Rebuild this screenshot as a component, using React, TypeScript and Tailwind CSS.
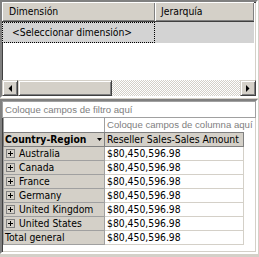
const rows = ['Australia', 'Canada', 'France', 'Germany', 'United Kingdom', 'United States']
const amount = '$80,450,596.98'

const raised =
  'bg-[#d4d0c8] border border-t-[#d4d0c8] border-l-[#d4d0c8] border-r-[#404040] border-b-[#404040] shadow-[inset_1px_1px_0_#fff,inset_-1px_-1px_0_#808080]'

const sunken =
  'border-2 border-t-[#808080] border-l-[#808080] border-r-[#fff] border-b-[#fff] shadow-[inset_1px_1px_0_#404040,inset_-1px_-1px_0_#d4d0c8]'

function Arrow({ dir }: { dir: 'left' | 'right' }) {
  return (
    <svg width="4" height="7" viewBox="0 0 4 7">
      {dir === 'left' ? <path d="M4 0V7L0.5 3.5Z" fill="#000" /> : <path d="M0 0V7L3.5 3.5Z" fill="#000" />}
    </svg>
  )
}

function Expander() {
  return (
    <span className="w-[9px] h-[9px] border border-[#808080] flex items-center justify-center shrink-0">
      <svg width="5" height="5" viewBox="0 0 5 5">
        <path d="M0 2.5H5M2.5 0V5" stroke="#000" strokeWidth="1" />
      </svg>
    </span>
  )
}

export default function App() {
  return (
    <div className="w-[259px] h-[257px] bg-[#d4d0c8] text-[10.3px] leading-none text-black font-['DejaVu_Sans_Condensed','DejaVu_Sans',sans-serif] font-stretch-condensed flex flex-col">
      {/* dimension grid */}
      <div className={`w-[258px] h-[98px] bg-white flex flex-col ${sunken}`}>
        <div className="flex h-[20px] shrink-0">
          <div className="w-[153px] bg-[#d4d0c8] border-b border-[#404040] shadow-[inset_1px_1px_0_#fff,inset_-1px_-1px_0_#808080] pl-[7px] flex items-center">
            Dimensión
          </div>
          <div className="w-[99px] bg-[#d4d0c8] border-b border-[#404040] shadow-[inset_1px_1px_0_#fff,inset_-1px_-1px_0_#808080] pl-[6px] flex items-center">
            Jerarquía
          </div>
        </div>
        <div className="flex h-[21px] shrink-0">
          <div className="w-[153px] bg-[#d3d3d3] border border-dotted border-black pl-[9px] flex items-center">
            &lt;Seleccionar dimensión&gt;
          </div>
          <div className="w-[99px] bg-[#d3d3d3]" />
        </div>
        <div className="flex-1" />
        <div className="flex h-[16px] shrink-0">
          <div className={`w-[16px] flex items-center justify-center ${raised}`}>
            <Arrow dir="left" />
          </div>
          <div className={`w-[94px] ${raised}`} />
          <div className="flex-1 bg-[repeating-conic-gradient(#d4d0c8_0_25%,#fff_0_50%)] bg-[length:2px_2px]" />
          <div className={`w-[16px] flex items-center justify-center ${raised}`}>
            <Arrow dir="right" />
          </div>
        </div>
      </div>

      <div className="h-[1px] shrink-0" />

      {/* pivot table */}
      <div className={`w-[258px] h-[155px] bg-white flex flex-col ${sunken}`}>
        <div className="h-[17px] shrink-0 border border-[#a0a0a0] flex items-center pl-[2px] text-[9.6px] text-[#808080] font-['Liberation_Sans',Arial,sans-serif] font-stretch-normal overflow-hidden whitespace-nowrap">
          Coloque campos de filtro aquí
        </div>
        <div className="flex h-[14px] shrink-0 pl-[1px]">
          <div className="w-[101px] border-l border-[#a0a0a0]" />
          <div className="flex-1 border-l border-[#a0a0a0] pl-[2px] flex items-center text-[9.6px] text-[#808080] font-['Liberation_Sans',Arial,sans-serif] font-stretch-normal overflow-hidden whitespace-nowrap">
            Coloque campos de columna aquí
          </div>
        </div>
        <div className="flex flex-col pl-[1px]">
          <div className="flex h-[15px]">
            <div className="w-[102px] bg-[#d4d0c8] border border-[#808080] pl-[1px] pr-[2px] flex items-center justify-between font-bold">
              <span>Country-Region</span>
              <svg width="5" height="3" viewBox="0 0 5 3">
                <path d="M0 0H5L2.5 3Z" fill="#000" />
              </svg>
            </div>
            <div className="w-[139px] bg-[#d4d0c8] border-y border-r border-[#808080] pl-[2px] flex items-center whitespace-nowrap overflow-hidden">
              Reseller Sales-Sales Amount
            </div>
          </div>
          {rows.map(r => (
            <div key={r} className="flex h-[14px]">
              <div className="w-[102px] bg-[#d4d0c8] border-x border-b border-[#a0a0a0] pl-[2px] flex items-center gap-[4px]">
                <Expander />
                <span>{r}</span>
              </div>
              <div className="w-[139px] border-b border-r border-[#d4d0c8] pl-[2px] flex items-center">{amount}</div>
            </div>
          ))}
          <div className="flex h-[14px]">
            <div className="w-[102px] bg-[#d4d0c8] border-x border-b border-[#a0a0a0] pl-[1px] flex items-center">
              Total general
            </div>
            <div className="w-[139px] border-b border-r border-[#d4d0c8] pl-[2px] flex items-center">{amount}</div>
          </div>
        </div>
      </div>
    </div>
  )
}
